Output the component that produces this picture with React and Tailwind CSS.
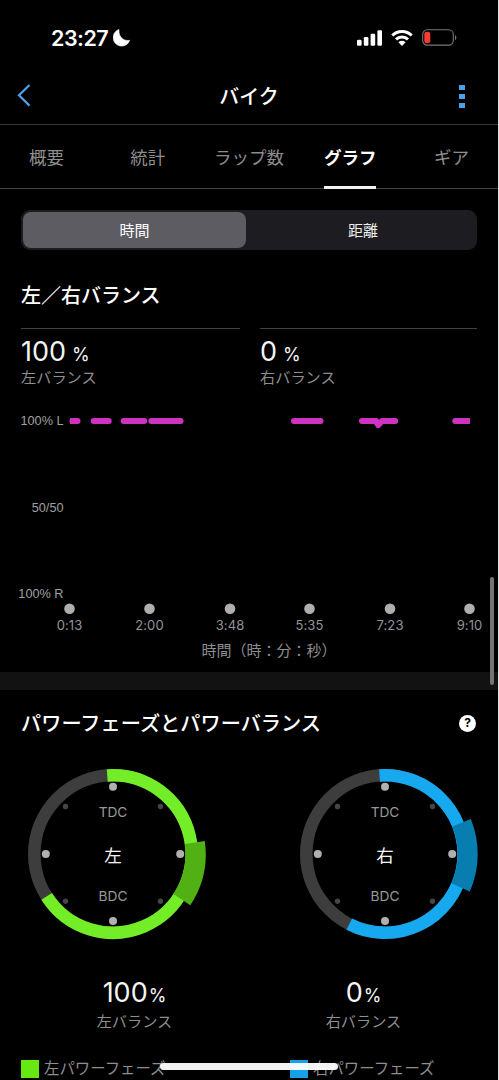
import { clsx } from 'clsx';

const tabs = ['概要', '統計', 'ラップ数', 'グラフ', 'ギア'];

// x ranges of the recorded left-balance samples
const segments = [
    [93.7, 108.7],
    [123.7, 144.2],
    [151.3, 180.5],
    [294, 320.5],
    [362, 376],
    [383, 395.2],
];

const ticks = [
    { x: 69.5, label: '0:13' },
    { x: 149.5, label: '2:00' },
    { x: 230, label: '3:48' },
    { x: 309.5, label: '5:35' },
    { x: 390, label: '7:23' },
    { x: 469.5, label: '9:10' },
];

// Angles are degrees clockwise from top dead centre
function arc(r, from, to) {
    const point = (deg) => {
        const a = (deg * Math.PI) / 180;
        return `${(94 + r * Math.sin(a)).toFixed(2)} ${(94 - r * Math.cos(a)).toFixed(2)}`;
    };
    return `M${point(from)} A${r} ${r} 0 ${to - from > 180 ? 1 : 0} 1 ${point(to)}`;
}

function StatusBar() {
    return (
        <div className="flex h-[66px] items-center justify-between pt-[9px] pr-[41px] pl-[51px]">
            <div className="flex items-center gap-[5px]">
                <span className="text-[21.5px] leading-6 font-semibold tracking-[-0.5px]">23:27</span>
                <svg width="18" height="18" viewBox="0 0 18 18" fill="#fff">
                    <path d="M6 .5A8.5 8.5 0 1 0 16.7 11.3C12.200 12.600 5.100 9 6 .5Z" stroke="#fff" strokeWidth="0.6" strokeLinejoin="round" />
                </svg>
            </div>
            <div className="flex items-center gap-[9px]">
                <svg width="25" height="16" viewBox="0 0 25 16" fill="#fff">
                    <rect x="0" y="9.7" width="4.6" height="6.1" rx="1.2" />
                    <rect x="6.8" y="7" width="4.6" height="8.8" rx="1.2" />
                    <rect x="13.6" y="3.7" width="4.6" height="12.1" rx="1.2" />
                    <rect x="20.4" y="0.2" width="4.6" height="15.6" rx="1.2" />
                </svg>
                <svg width="22" height="16" viewBox="0 0 22 16" fill="none" stroke="#fff" strokeWidth="3">
                    <path d="M1.3 5.5a13.8 13.8 0 0 1 19.4 0" />
                    <path d="M5 9.4a8.5 8.5 0 0 1 12 0" />
                    <path d="M11 15.9 7.4 12.3a5.1 5.1 0 0 1 7.2 0Z" fill="#fff" stroke="none" />
                </svg>
                <svg width="35" height="17" viewBox="0 0 35 17" fill="none">
                    <rect x="0.7" y="0.7" width="30.6" height="15.4" rx="4.6" stroke="#777" strokeWidth="1.1" />
                    <rect x="2.3" y="2.8" width="6" height="11.2" rx="2.6" fill="#fb3b30" />
                    <path d="M33 6v5.2c1.8-.8 1.8-4.4 0-5.2Z" fill="#777" />
                </svg>
            </div>
        </div>
    );
}

function Stat({ value, label, className }) {
    return (
        <div className={clsx('border-t border-[#414141]', className)}>
            <div className="mt-[9px] h-7 text-[27px] leading-7 text-[#f4f4f4]">
                {value}
                <span className="ml-[6px] text-[18px]">%</span>
            </div>
            <div className="mt-px text-[15.2px] leading-[22px] text-[#8e8e8e]">{label}</div>
        </div>
    );
}

function BalanceChart() {
    return (
        <svg className="block" width="498" height="224" viewBox="0 410 498 224">
            <g className="font-['Liberation_Sans',sans-serif]" fill="#a0a0a0" fontSize="12.7" textAnchor="end">
                <text x="63.5" y="425.2">100% L</text>
                <text x="63.5" y="511.5">50/50</text>
                <text x="63.5" y="598.2">100% R</text>
            </g>
            <g stroke="#cf32c0" strokeWidth="6" strokeLinecap="round" fill="none">
                <path d="M70 421h2" strokeLinecap="butt" />
                <path d="M72.5 421h5" />
                {segments.map(([from, to]) => (
                    <path key={from} d={`M${from} 421H${to}`} />
                ))}
                <path d="M376 421.5L378.3 425L381.5 421.5" strokeLinejoin="round" />
                <path d="M455.3 421h10" />
                <path d="M465 421h5" strokeLinecap="butt" />
            </g>
            {ticks.map(({ x, label }) => (
                <g key={label}>
                    <circle cx={x} cy="608.8" r="5.3" fill="#afafaf" />
                    <text x={x} y="630.3" fill="#949494" fontSize="13" letterSpacing="0.1" textAnchor="middle">{label}</text>
                </g>
            ))}
        </svg>
    );
}

function Dial({ side, color, peakColor, phase, peak }) {
    return (
        <svg width="188" height="188" viewBox="0 0 188 188" fill="none">
            <circle cx="94" cy="94" r="78.7" stroke="#3d3d3d" strokeWidth="12.6" />
            <path d={arc(78.7, phase[0], phase[1])} stroke={color} strokeWidth="12.6" />
            <path d={arc(82.6, peak[0], peak[1])} stroke={peakColor} strokeWidth="20.2" />
            <g fill="#b0b0b0">
                <circle cx="94" cy="26.8" r="4" />
                <circle cx="161.2" cy="94" r="4" />
                <circle cx="94" cy="161" r="4" />
                <circle cx="26.8" cy="94" r="4" />
            </g>
            <g fill="#464646">
                <circle cx="46.5" cy="46.5" r="2.7" />
                <circle cx="141.5" cy="46.5" r="2.7" />
                <circle cx="46.5" cy="141.3" r="2.7" />
                <circle cx="141.5" cy="141.3" r="2.7" />
            </g>
            <g textAnchor="middle">
                <text x="94" y="57" fontSize="13.7" fill="#999">TDC</text>
                <text x="94" y="102" fontSize="17.5" fill="#f4f4f4">{side}</text>
                <text x="94" y="140.5" fontSize="13.7" fill="#999">BDC</text>
            </g>
        </svg>
    );
}

function Share({ value, label }) {
    return (
        <div className="flex flex-col items-center">
            <div className="h-7 text-[27px] leading-7 text-[#f4f4f4]">
                {value}
                <span className="ml-px text-[18px]">%</span>
            </div>
            <div className="mt-1 text-[15.2px] leading-[22px] text-[#8e8e8e]">{label}</div>
        </div>
    );
}

export default function App() {
    return (
        <div className="h-[1080px] w-[499px] overflow-hidden border-r border-[#e4e4e4] bg-black font-['Inter','Noto_Sans_CJK_JP',sans-serif] text-white">
            <div className="relative h-full">
                <StatusBar />

                {/* Title bar */}
                <header className="flex h-[59px] items-center justify-between border-b border-[#363636] pr-[33px] pl-[17px]">
                    <svg width="14" height="24" viewBox="0 0 14 24" fill="none" stroke="#4da0ea" strokeWidth="2.2">
                        <path d="M12.5 2 2 12.3 12.5 22.6" />
                    </svg>
                    <h1 className="mt-[3px] ml-[8px] text-[20px] leading-7 font-medium">バイク</h1>
                    <div className="flex flex-col gap-1 pt-0.5">
                        <span className="h-[5px] w-1.5 bg-[#4da0ea]" />
                        <span className="h-[5px] w-1.5 bg-[#4da0ea]" />
                        <span className="h-[5px] w-1.5 bg-[#4da0ea]" />
                    </div>
                </header>

                {/* Tabs */}
                <nav className="h-16 border-b border-[#414141]">
                    <div className="-mx-1 grid h-full grid-cols-5">
                        {tabs.map((tab) => (
                            <div key={tab} className="flex justify-center">
                                <span
                                    className={clsx(
                                        'h-16 pt-[19px] text-[17.5px] leading-7',
                                        tab === 'グラフ' ? 'border-b-[3px] border-[#f2f2f2] font-bold' : 'text-[#8e8e8e]'
                                    )}
                                >
                                    {tab}
                                </span>
                            </div>
                        ))}
                    </div>
                </nav>

                <div className="mx-[21px] mt-[21px] grid h-10 grid-cols-2 rounded-[9px] bg-[#1d1c20] text-[15px]">
                    <div className="my-0.5 mr-[3px] ml-0.5 flex items-center justify-center rounded-[8px] bg-[#5d5c62] pt-0.5">時間</div>
                    <div className="flex items-center justify-center pt-0.5 text-[#eee]">距離</div>
                </div>

                <h2 className="mt-8 ml-[21px] text-[20px] leading-7 font-medium">左／右バランス</h2>
                <div className="mt-[18px] flex h-[82px] gap-5 pl-[21px]">
                    <Stat value="100" label="左バランス" className="w-[219px]" />
                    <Stat value="0" label="右バランス" className="w-[217px]" />
                </div>
                <BalanceChart />
                <p className="h-[38px] pt-1.5 pl-10 text-center text-[15px] leading-[22px] text-[#8e8e8e]">時間（時：分：秒）</p>
                <div className="h-[18px] bg-[#121212]" />

                <div className="flex h-[66px] items-center justify-between pr-[22px] pl-[21px]">
                    <h2 className="mt-0.5 text-[20.2px] leading-7 font-medium">パワーフェーズとパワーバランス</h2>
                    <div className="flex size-[17px] items-center justify-center rounded-full bg-white text-[12px] leading-none font-bold text-black">?</div>
                </div>

                <div className="mt-[4px] flex gap-[84px] pl-[19px]">
                    <Dial side="左" color="#73ed27" peakColor="#51b014" phase={[-4.2, 237.5]} peak={[82, 123.5]} />
                    <Dial side="右" color="#16a9f0" peakColor="#087db0" phase={[-4, 207]} peak={[67.8, 113.8]} />
                </div>

                <div className="mt-[31px] grid grid-cols-2 px-[20px]">
                    <Share value="100" label="左バランス" />
                    <Share value="0" label="右バランス" />
                </div>

                <div className="mt-[25px] flex pl-[21px] text-[15.4px] leading-[22px] text-[#8e8e8e]">
                    <div className="flex w-[269px] items-center gap-[5px]">
                        <span className="size-[18px] bg-[#66e813]" />
                        左パワーフェーズ
                    </div>
                    <div className="flex items-center gap-[5px]">
                        <span className="size-[18px] bg-[#16a1e6]" />
                        右パワーフェーズ
                    </div>
                </div>

                {/* Scroll indicator and home bar float above the page */}
                <div className="absolute top-[577px] right-[4px] h-[108px] w-1 rounded-full bg-[#747474]" />
                <div className="absolute top-[1063px] left-[160px] h-[7px] w-[178px] rounded-full bg-white/95" />
            </div>
        </div>
    );
}
